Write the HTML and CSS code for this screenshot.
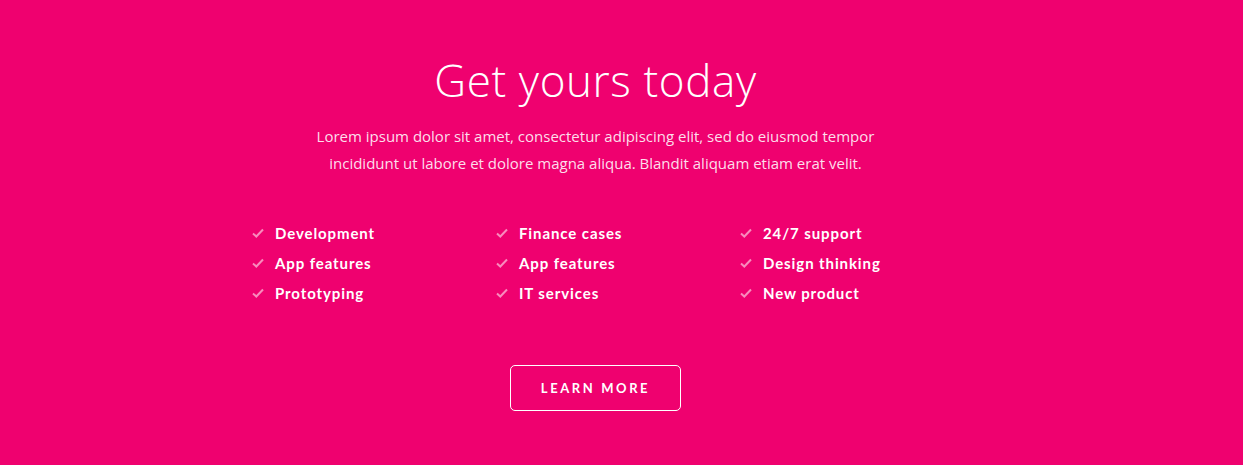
FILE: index.html
```html
<!DOCTYPE html>
<html>
<head>
<meta charset="utf-8">
<link rel="stylesheet" href="styles.css">
</head>
<body>
<section class="cta">
  <h1 class="title">Get yours today</h1>
  <p class="lead">Lorem ipsum dolor sit amet, consectetur adipiscing elit, sed do eiusmod tempor<br>incididunt ut labore et dolore magna aliqua. Blandit aliquam etiam erat velit.</p>
  <ul class="features">
    <li><svg class="check" viewBox="0 0 12 10"><path d="M1 5.5 L4.3 8.5 L11 1.5" /></svg>Development</li>
    <li><svg class="check" viewBox="0 0 12 10"><path d="M1 5.5 L4.3 8.5 L11 1.5" /></svg>Finance cases</li>
    <li><svg class="check" viewBox="0 0 12 10"><path d="M1 5.5 L4.3 8.5 L11 1.5" /></svg>24/7 support</li>
    <li><svg class="check" viewBox="0 0 12 10"><path d="M1 5.5 L4.3 8.5 L11 1.5" /></svg>App features</li>
    <li><svg class="check" viewBox="0 0 12 10"><path d="M1 5.5 L4.3 8.5 L11 1.5" /></svg>App features</li>
    <li><svg class="check" viewBox="0 0 12 10"><path d="M1 5.5 L4.3 8.5 L11 1.5" /></svg>Design thinking</li>
    <li><svg class="check" viewBox="0 0 12 10"><path d="M1 5.5 L4.3 8.5 L11 1.5" /></svg>Prototyping</li>
    <li><svg class="check" viewBox="0 0 12 10"><path d="M1 5.5 L4.3 8.5 L11 1.5" /></svg>IT services</li>
    <li><svg class="check" viewBox="0 0 12 10"><path d="M1 5.5 L4.3 8.5 L11 1.5" /></svg>New product</li>
  </ul>
  <a class="btn" href="#">LEARN MORE</a>
</section>
</body>
</html>
```

FILE: styles.css
```css
html, body {
  margin: 0;
  padding: 0;
  background: #ef016f;
}
.cta {
  width: 1191px;
  height: 465px;
  box-sizing: border-box;
  padding-top: 52px;
  display: flex;
  flex-direction: column;
  align-items: center;
  color: #fff;
}
.title {
  margin: 0;
  font-family: "Open Sans", sans-serif;
  font-weight: 300;
  font-size: 44px;
  line-height: 56px;
  letter-spacing: 0.6px;
}
.lead {
  margin: 15px 0 0;
  font-family: "Open Sans", sans-serif;
  font-size: 15px;
  line-height: 27px;
  text-align: center;
  color: rgba(255, 255, 255, 0.88);
}
.features {
  list-style: none;
  margin: 47px 0 0 45px;
  padding: 0;
  display: grid;
  grid-template-columns: repeat(3, 244px);
  row-gap: 12px;
}
.features li {
  display: flex;
  align-items: center;
  font-family: "Lato", sans-serif;
  font-weight: 700;
  font-size: 15px;
  line-height: 18px;
  letter-spacing: 0.9px;
}
.check {
  width: 12px;
  height: 10px;
  margin-right: 11px;
  fill: none;
  stroke: #f88bbd;
  stroke-width: 2;
}
.btn {
  margin-top: 63px;
  width: 171px;
  height: 46px;
  box-sizing: border-box;
  border: 1px solid #fff;
  border-radius: 5px;
  display: flex;
  align-items: center;
  justify-content: center;
  font-family: "Lato", sans-serif;
  font-weight: 700;
  font-size: 13px;
  letter-spacing: 2.6px;
  color: #fff;
  text-decoration: none;
}
```
